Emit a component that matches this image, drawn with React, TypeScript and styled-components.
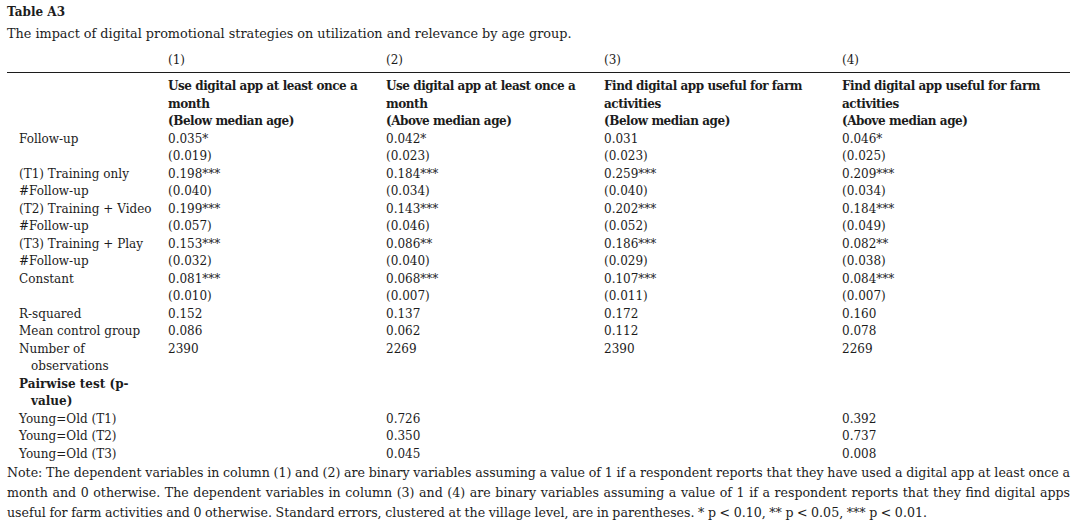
import * as React from 'react';
import styled, { createGlobalStyle } from 'styled-components';

const GlobalStyle = createGlobalStyle`
	html, body {
		margin: 0;
		padding: 0;
		background: #ffffff;
	}
	body {
		font-family: 'DejaVu Serif', 'Liberation Serif', serif;
		color: #1c1c1c;
	}
`;

const Page = styled.div`
	padding: 2px 10px 0 7px;
	width: 1063px;
	font-size: 12px;
`;

const Title = styled.div`
	font-weight: bold;
	line-height: 21px;
`;

const Caption = styled.div`
	font-size: 12.8px;
	line-height: 21px;
`;

const Table = styled.table`
	width: 1063px;
	border-collapse: collapse;
	table-layout: fixed;
	font-size: 12px;
	td, th {
		padding: 0;
		line-height: 17.5px;
		vertical-align: top;
		text-align: left;
		font-weight: normal;
	}
`;

const NumCell = styled.th`
	&& {
		padding: 8px 0 2px;
		border-bottom: 1.5px solid #1c1c1c;
	}
`;

const HeadCell = styled.th`
	&& {
		padding-top: 5.5px;
		font-weight: bold;
		letter-spacing: -0.45px;
		white-space: nowrap;
	}
`;

const Label = styled.td<{ $bold?: boolean }>`
	&& {
		padding: 0 8px 0 24px;
		text-indent: -12px;
		font-weight: ${props => (props.$bold ? 'bold' : 'normal')};
	}
`;

const Note = styled.p`
	margin: 0;
	font-size: 12.6px;
	word-spacing: -0.45px;
	line-height: 20px;
	text-align: justify;
`;

const widths = [161, 218, 218, 238, 228];

const heads = [
	['Use digital app at least once a', 'month', '(Below median age)'],
	['Use digital app at least once a', 'month', '(Above median age)'],
	['Find digital app useful for farm', 'activities', '(Below median age)'],
	['Find digital app useful for farm', 'activities', '(Above median age)'],
];

type Row = { label: string; bold?: boolean; values: string[] };

const rows: Row[] = [
	{ label: 'Follow-up', values: ['0.035*', '0.042*', '0.031', '0.046*'] },
	{ label: '', values: ['(0.019)', '(0.023)', '(0.023)', '(0.025)'] },
	{ label: '(T1) Training only', values: ['0.198***', '0.184***', '0.259***', '0.209***'] },
	{ label: '#Follow-up', values: ['(0.040)', '(0.034)', '(0.040)', '(0.034)'] },
	{ label: '(T2) Training + Video', values: ['0.199***', '0.143***', '0.202***', '0.184***'] },
	{ label: '#Follow-up', values: ['(0.057)', '(0.046)', '(0.052)', '(0.049)'] },
	{ label: '(T3) Training + Play', values: ['0.153***', '0.086**', '0.186***', '0.082**'] },
	{ label: '#Follow-up', values: ['(0.032)', '(0.040)', '(0.029)', '(0.038)'] },
	{ label: 'Constant', values: ['0.081***', '0.068***', '0.107***', '0.084***'] },
	{ label: '', values: ['(0.010)', '(0.007)', '(0.011)', '(0.007)'] },
	{ label: 'R-squared', values: ['0.152', '0.137', '0.172', '0.160'] },
	{ label: 'Mean control group', values: ['0.086', '0.062', '0.112', '0.078'] },
	{ label: 'Number of observations', values: ['2390', '2269', '2390', '2269'] },
	{ label: 'Pairwise test (p-value)', bold: true, values: ['', '', '', ''] },
	{ label: 'Young=Old (T1)', values: ['', '0.726', '', '0.392'] },
	{ label: 'Young=Old (T2)', values: ['', '0.350', '', '0.737'] },
	{ label: 'Young=Old (T3)', values: ['', '0.045', '', '0.008'] },
];

export default function App() {
	return (
		<>
			<GlobalStyle />
			<Page>
				<Title>Table A3</Title>
				<Caption>The impact of digital promotional strategies on utilization and relevance by age group.</Caption>
				<Table>
					<colgroup>
						{widths.map((w, i) => <col key={i} style={{ width: w }} />)}
					</colgroup>
					<thead>
						<tr>
							<NumCell />
							<NumCell>(1)</NumCell>
							<NumCell>(2)</NumCell>
							<NumCell>(3)</NumCell>
							<NumCell>(4)</NumCell>
						</tr>
						<tr>
							<HeadCell />
							{heads.map((lines, i) => (
								<HeadCell key={i}>
									{lines.map((l, j) => <div key={j}>{l}</div>)}
								</HeadCell>
							))}
						</tr>
					</thead>
					<tbody>
						{rows.map((r, i) => (
							<tr key={i}>
								<Label $bold={r.bold}>{r.label}</Label>
								{r.values.map((v, j) => <td key={j}>{v}</td>)}
							</tr>
						))}
					</tbody>
				</Table>
				<Note>
					Note: The dependent variables in column (1) and (2) are binary variables assuming a value of 1 if a respondent reports that they have used a digital app at least once a month and 0 otherwise. The dependent variables in column (3) and (4) are binary variables assuming a value of 1 if a respondent reports that they find digital apps useful for farm activities and 0 otherwise. Standard errors, clustered at the village level, are in parentheses. * p &lt; 0.10, ** p &lt; 0.05, *** p &lt; 0.01.
				</Note>
			</Page>
		</>
	);
}
